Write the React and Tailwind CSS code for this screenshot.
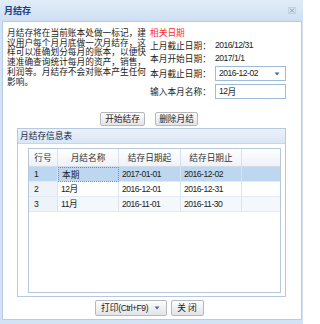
import React from "react";

const rows = [
  { no: "1", name: "本期", from: "2017-01-01", to: "2016-12-02", selected: true },
  { no: "2", name: "12", from: "2016-12-01", to: "2016-12-31" },
  { no: "3", name: "11", from: "2016-11-01", to: "2016-11-30", alt: true },
];

const introLines = [
  "月结存将在当前账本处做一标记，建",
  "议用户每个月月底做一次月结存，这",
  "样可以准确划分每月的账本，以便快",
  "速准确查询统计每月的资产，销售，",
  "利润等。月结存不会对账本产生任何",
  "影响。",
];

// latin runs are narrower than the cjk font in the picture
const Num = ({ children }) => (
  <span className="font-['Liberation_Sans',sans-serif] text-[8.6px] tracking-[-0.5px]">{children}</span>
);

const CloseIcon = () => (
  <svg width="8" height="7" viewBox="0 0 8 7" className="block">
    <rect x="0.5" y="0.5" width="7" height="6" fill="none" stroke="#b4bcc8" strokeDasharray="1 1" />
    <path d="M2 1.5 L6 5.5 M6 1.5 L2 5.5" stroke="#8c96a4" strokeWidth="1" />
  </svg>
);

const Arrow = () => (
  <svg width="6" height="4" viewBox="0 0 6 4" className="block">
    <path d="M0.5 0.5 H5.5 L3 3.5 Z" fill="#3c6db4" />
  </svg>
);

function Button({ children, className = "" }) {
  return (
    <div
      className={
        "flex items-center justify-center rounded-[2px] border border-[#b5b8bd] bg-gradient-to-b from-[#fdfdfd] to-[#e2e4e7] text-[#222] " +
        className
      }
    >
      {children}
    </div>
  );
}

export default function App() {
  return (
    <div className="w-[303px] h-[324px] flex flex-col bg-[#d3e3f5] font-['Noto_Sans_CJK_SC',sans-serif] text-[8.7px] text-[#222] overflow-hidden">
      {/* title bar */}
      <div className="h-[21px] flex items-center justify-between pl-[4px] pr-[7px] bg-gradient-to-b from-[#e2ecf8] to-[#cfdff3]">
        <span className="font-bold text-[#15428b] text-[9px]">月结存</span>
        <CloseIcon />
      </div>

      {/* body */}
      <div className="flex-1 flex flex-col ml-[2px] mr-[1px] mb-[4px] border border-[#b7cbe4] bg-white">
        <div className="flex mt-[4px]">
          <div className="w-[146px] pl-[4px] pt-[2px] leading-[9.7px] whitespace-nowrap">
            {introLines.map((l) => (
              <div key={l}>{l}</div>
            ))}
          </div>
          <div className="flex flex-col ml-[1px]">
            <div className="h-[13px] flex items-center text-[#ff2a2a]">相关日期</div>
            <div className="h-[13px] flex items-center">
              <span className="w-[65px]">上月截止日期：</span>
              <Num>2016/12/31</Num>
            </div>
            <div className="h-[13px] flex items-center">
              <span className="w-[65px]">本月开始日期：</span>
              <Num>2017/1/1</Num>
            </div>
            <div className="h-[15px] mt-[1px] flex items-center">
              <span className="w-[65px]">本月截止日期：</span>
              <div className="w-[71px] h-[15px] border border-[#9fbadb] flex items-center justify-between pl-[3px] pr-[5px]">
                <Num>2016-12-02</Num>
                <Arrow />
              </div>
            </div>
            <div className="h-[15px] mt-[3px] flex items-center">
              <span className="w-[65px]">输入本月名称：</span>
              <div className="w-[71px] h-[15px] border border-[#9fbadb] flex items-center pl-[3px]">
                <Num>12</Num>月
              </div>
            </div>
          </div>
        </div>

        <div className="flex justify-center gap-[10px] mt-[13px] ml-[-6px]">
          <Button className="w-[45px] h-[14px]">开始结存</Button>
          <Button className="w-[43px] h-[14px]">删除月结</Button>
        </div>

        {/* group box */}
        <div className="flex-1 flex flex-col mt-[2px] ml-[14px] mr-[15px] border border-[#b9c9dd]">
          <div className="h-[15px] flex items-center pl-[2px] bg-gradient-to-b from-[#eaf1fa] to-[#d9e6f6] border-b border-[#c6d6ea] text-[#15283f]">
            月结存信息表
          </div>
          <div className="flex-1 mt-[4px] ml-[10px] mr-[4px] mb-[3px] border border-[#b8c8dc] bg-white">
            <div className="grid grid-cols-[29px_61px_62px_61px_1fr] h-[18px] bg-gradient-to-b from-[#ffffff] to-[#eef2f7] border-b border-[#d2dce8] text-[#333]">
              <div className="flex items-center justify-center border-r border-[#d7e0eb]">行号</div>
              <div className="flex items-center justify-center border-r border-[#d7e0eb]">月结名称</div>
              <div className="flex items-center justify-center border-r border-[#d7e0eb]">结存日期起</div>
              <div className="flex items-center justify-center border-r border-[#d7e0eb]">结存日期止</div>
              <div />
            </div>
            {rows.map((r) => (
              <div
                key={r.no}
                className={
                  "grid grid-cols-[29px_61px_62px_61px_1fr] h-[15px] border-b border-[#e3eaf3] " +
                  (r.selected ? "bg-[#bed7f0]" : r.alt ? "bg-[#f4f8fd]" : "bg-white")
                }
              >
                <div
                  className={
                    "flex items-center pl-[5px] border-r border-[#dbe4ef] " +
                    (r.selected ? "" : "bg-[#eef3fa]")
                  }
                >
                  <Num>{r.no}</Num>
                </div>
                <div
                  className={
                    "flex items-center pl-[3px] border-r " +
                    (r.selected ? "border border-dotted border-[#5a8fd0]" : "border-[#dbe4ef]")
                  }
                >
                  {r.selected ? r.name : (
                    <span>
                      <Num>{r.name}</Num>月
                    </span>
                  )}
                </div>
                <div className="flex items-center pl-[3px] border-r border-[#dbe4ef]">
                  <Num>{r.from}</Num>
                </div>
                <div className="flex items-center pl-[3px] border-r border-[#dbe4ef]">
                  <Num>{r.to}</Num>
                </div>
                <div />
              </div>
            ))}
          </div>
        </div>

        <div className="flex justify-center gap-[4px] mt-[3px] mb-[3px] ml-[-6px]">
          <Button className="w-[72px] h-[16px] gap-[6px]">
            <span>
              打印<Num>(Ctrl+F9)</Num>
            </span>
            <Arrow />
          </Button>
          <Button className="w-[33px] h-[16px]">关 闭</Button>
        </div>
      </div>
    </div>
  );
}
